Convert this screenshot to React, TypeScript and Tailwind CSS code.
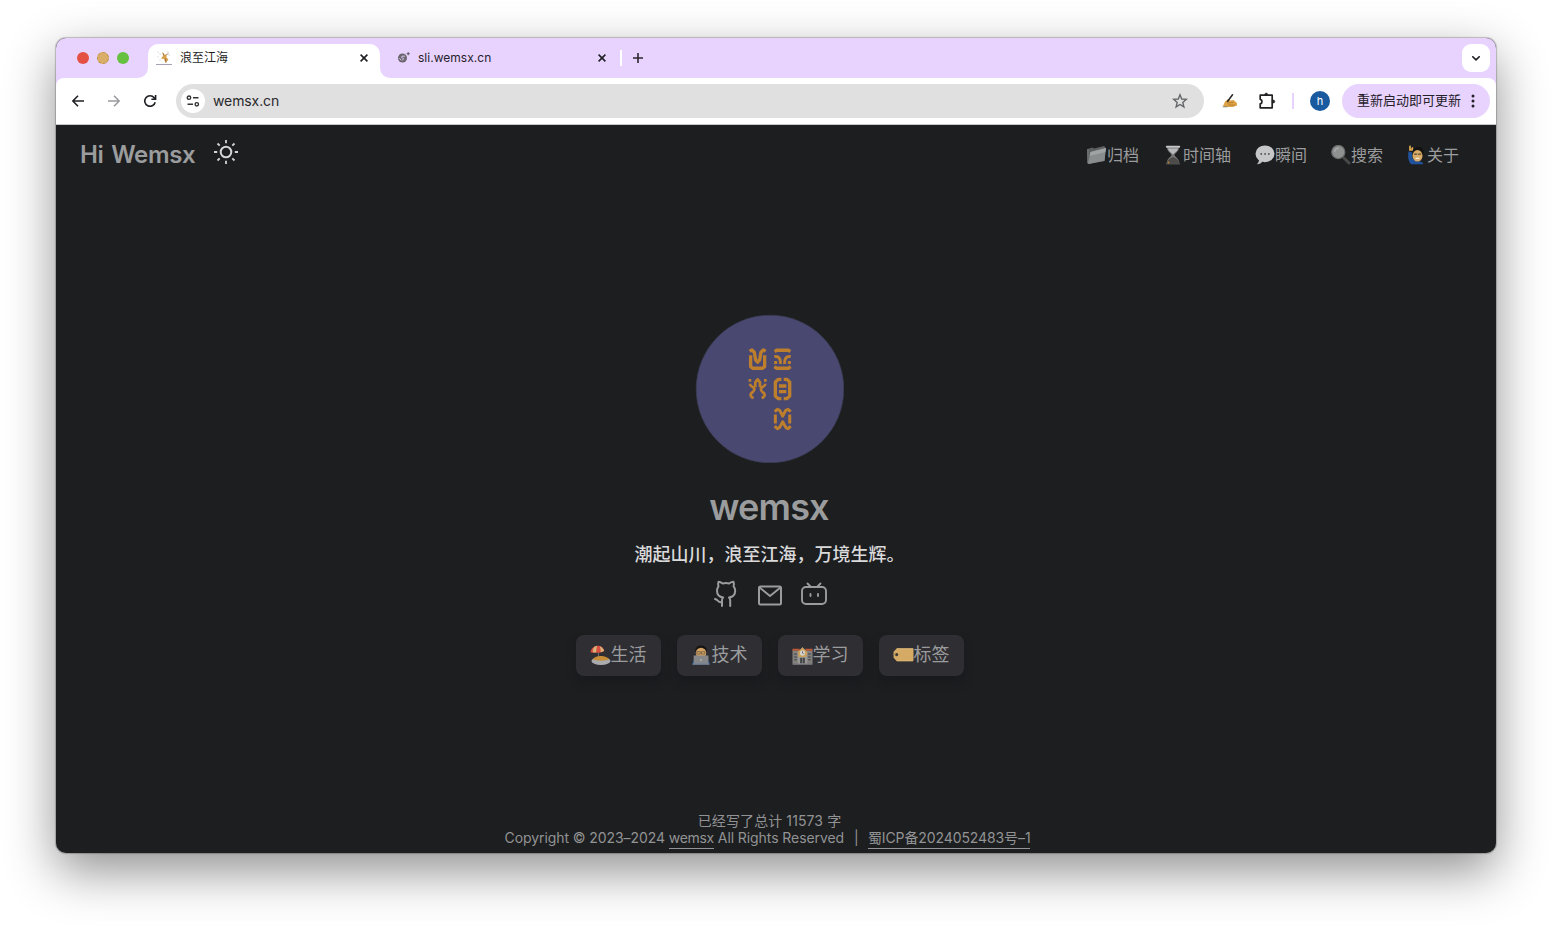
import React from "react";

const glyph = "fill-none stroke-current";

function Svg({ box, className, children }: { box: string; className: string; children: React.ReactNode }) {
  return (
    <svg viewBox={box} className={`shrink-0 ${className}`} fill="none" strokeLinecap="round" strokeLinejoin="round">
      {children}
    </svg>
  );
}

const Close = () => (
  <Svg box="0 0 8 8" className="size-2">
    <path d="M.6.6 7.4 7.4M7.4.6.6 7.4" stroke="#1f1f24" strokeWidth="1.6" strokeLinecap="butt" />
  </Svg>
);

const SurferFavicon = () => (
  <Svg box="0 0 16 16" className="size-4">
    <path d="M6.500 2.500l2 2.500 2-1 0 3.500 2 2-3 3.500-1.500-4-3-.5 2-2.500z" fill="#d9a04c" />
    <path d="M7 3l1 2M10.500 5l1.500-1.500M9.500 9l.5 3" stroke="#8a6238" strokeWidth=".8" />
    <path d="M2 2h.1M4 4h.1M12 2h.1M13 5h.1M2 7h.1M4 10h.1" stroke="#bbb" />
    <path d="M.5 14.500h15" stroke="#a79fb5" strokeWidth="1" />
  </Svg>
);

const GlobeFavicon = () => (
  <Svg box="0 0 14 12" className="w-3.5 h-3">
    <circle cx="4.500" cy="6" r="4.500" fill="#6b6670" />
    <path d="M6.500 4.200H4.200c-1.500 1-.5 1.700.6 1.800 1.400.2 1.200 1.500-.3 1.900M1.700 6.500l1.300 1.500" stroke="#dccaf0" strokeWidth="1" />
    <path d="M10.200.5v2.400M9 1.700h2.400" stroke="#5b5661" strokeWidth="1" />
  </Svg>
);

const Folder = () => (
  <Svg box="0 0 20 20" className="size-5">
    <path d="M.5 4l5-1.500 1.500 1 10-2.500 1.500 1.500-1 13-15 3.500-1.500-1z" fill="#5d6061" />
    <path d="M1 19l2.500-12 15.500-4-1.500 13z" fill="#8a8d8e" />
    <path d="M3.500 7l15.500-4-.6 4L2.500 11z" fill="#a0a3a4" />
    <path d="M.8 4.500v13.500" stroke="#a5a5a5" strokeWidth=".7" />
  </Svg>
);

const Hourglass = () => (
  <Svg box="0 0 20 20" className="size-5">
    <path d="M4 2.5h12c0 4-4.5 6-4.5 7.5s4.5 3.500 4.500 7.500H4c0-4 4.500-6 4.500-7.500S4 6.500 4 2.500z" fill="#777" />
    <path d="M5 3.500h10c-.5 3-4 4.500-5 6-1-1.500-4.500-3-5-6z" fill="#b9babb" />
    <path d="M3.800 1.800h12.400" stroke="#c7c7c7" strokeWidth="2" />
    <path d="M4.500 17.500c0-3 3-4 5.500-5.500 2.500 1.500 5.500 2.500 5.500 5.500z" fill="#4d4a49" />
    <path d="M3.800 18.500h12.400" stroke="#4e4e4e" strokeWidth="2" />
    <circle cx="5.500" cy="17.500" r=".9" fill="#bd812e" />
  </Svg>
);

const Bubble = () => (
  <Svg box="0 0 20 20" className="size-5">
    <path d="M4 14.500c0 2-1 3.500-2 4.800 2.500 0 4.500-1.200 5.500-3z" fill="#c0c1c2" />
    <ellipse cx="10" cy="8.800" rx="9.500" ry="8.400" fill="#c6c7c8" />
    <path d="M6.200 8.900h.1M10 8.900h.1M13.800 8.900h.1" stroke="#4b4b4b" strokeWidth="1.700" />
  </Svg>
);

const Lens = () => (
  <Svg box="0 0 20 20" className="size-5">
    <path d="M13 13l5 5" stroke="#484848" strokeWidth="3" />
    <circle cx="7.300" cy="7" r="6.600" fill="#8f9191" stroke="#696b6b" strokeWidth="1.200" />
    <path d="M3.700 6.500c.3-2 1.500-3 3.500-3.300" stroke="#a9abab" strokeWidth="1.200" />
  </Svg>
);

const RaisedHand = () => (
  <Svg box="0 0 20 20" className="size-5">
    <path d="M1.500 6.500c-1 6 0 9.500 2.500 12.800h12c1-2-2.500-3-6-3-4-.5-5.500-4-5-9z" fill="#20529c" />
    <path d="M3 5V1.300M5 5l.5-2M3 4.500h2" stroke="#d6a34f" strokeWidth="1.800" />
    <ellipse cx="11.300" cy="7" rx="5.600" ry="5" fill="#141312" />
    <ellipse cx="10.500" cy="10.800" rx="5" ry="5.800" fill="#d9ac67" />
    <path d="M7.500 9.200h2.200M11.500 9.200h2.200" stroke="#5f4934" strokeWidth="1.200" />
    <path d="M9 13.300h3" stroke="#f3e7df" strokeWidth="1.200" />
  </Svg>
);

const Beach = () => (
  <Svg box="0 0 22 22" className="w-[21px] h-[22px]">
    <path d="M8.500 7l.8 7" stroke="#777" strokeWidth="1" />
    <ellipse cx="11.500" cy="17.300" rx="10" ry="4.200" fill="#a9abad" />
    <path d="M3 15.500c1-2 4-3.500 8-3.500s8 1.500 9 3.500c-4 2-13 2-17 0z" fill="#c78c37" />
    <path d="M.5 8C1 4 4 1.500 8 1.200c4 0 6.500 2.500 7 5.500C12 9 4 9 .5 8z" fill="#d84f40" />
    <path d="M5 2c-2 2-2 4-2 6l3.500.3c0-3 .5-5 1-7zM10 1.500c1 2 1.300 4 1.200 6.500l3.500-1.300c-.5-2-2-4-4.700-5.200z" fill="#d6b47a" />
  </Svg>
);

const Coder = () => (
  <Svg box="0 0 22 22" className="w-[21px] h-[22px]">
    <path d="M1.500 21c0-4 2-6 5-7h8c3 1 5 3 5 7z" fill="#20528f" />
    <ellipse cx="10.500" cy="6" rx="6" ry="5" fill="#171514" />
    <ellipse cx="10.500" cy="9" rx="5.500" ry="5.700" fill="#d2a363" />
    <path d="M6.500 7.500h3.200v2.500H6.500zM11.300 7.500h3.200v2.500h-3.200z" stroke="#6d5942" strokeWidth=".8" />
    <path d="M2.800 11.500h15.500V20H2.800z" fill="#858789" />
    <path d="M2 20.500h17" stroke="#a2a3a3" strokeWidth="1" />
    <circle cx="10.500" cy="16" r=".9" fill="#c1c1c1" />
  </Svg>
);

const School = () => (
  <Svg box="0 0 22 22" className="w-[21px] h-[22px]">
    <path d="M.5 6h21v14H.5z" fill="#83807e" />
    <path d="M.5 4.500H8V6.500H.5zM14 4.500h7.500v2H14z" fill="#bd5935" />
    <path d="M6 8l5-5 5 5v12H6z" fill="#999896" />
    <path d="M6 8l5-5 5 5-1 5H7z" fill="#caa05b" />
    <circle cx="11" cy="8.800" r="2.700" fill="#d4d2cc" />
    <path d="M11 7.500v1.500l1 .5" stroke="#444" strokeWidth=".7" />
    <path d="M8.500 14h5v6h-5z" fill="#444547" />
    <path d="M11 14v6" stroke="#8a8a8a" strokeWidth=".7" />
    <path d="M2.500 10h2.500M2.500 13h2.500M2.500 16h2.500M17 10h2.500M17 13h2.500M17 16h2.500" stroke="#505154" strokeWidth="1.500" strokeLinecap="butt" />
    <path d="M1 20.500h20" stroke="#a5a5a5" />
  </Svg>
);

const Label = () => (
  <Svg box="0 0 22 22" className="w-[21px] h-[22px]">
    <path d="M4 4h16.500c.8 0 1 .5 1 1v11.500c0 .7-.4 1-1 1H4L.6 14V7.500z" fill="#d4aa65" />
    <path d="M4.500 4.500h16M4.500 17h16" stroke="#dfbc80" strokeWidth=".7" />
    <circle cx="3.800" cy="10.600" r="1.700" fill="#403b35" />
    <path d="M.2 10.600h2" stroke="#a0875f" />
  </Svg>
);

const nav = [
  { icon: <Folder />, text: "归档" },
  { icon: <Hourglass />, text: "时间轴" },
  { icon: <Bubble />, text: "瞬间" },
  { icon: <Lens />, text: "搜索" },
  { icon: <RaisedHand />, text: "关于" },
];

const categories = [
  { icon: <Beach />, text: "生活" },
  { icon: <Coder />, text: "技术" },
  { icon: <School />, text: "学习" },
  { icon: <Label />, text: "标签" },
];

function TabStrip() {
  return (
    <div className="flex h-10 shrink-0 bg-[#e8d3fe]">
      <div className="flex w-[92px] items-center gap-2 pl-[21px]">
        <span className="size-3 rounded-full bg-[#e55044]" />
        <span className="size-3 rounded-full border border-dashed border-[#bd8b3d] bg-[#d9ae68]" />
        <span className="size-3 rounded-full bg-[#65c13f]" />
      </div>
      <div className="relative mt-1.5 flex h-[34px] w-[232px] items-start rounded-t-[10px] bg-white px-2 pt-1.5">
        <svg className="absolute -left-2.5 bottom-0 size-2.5" viewBox="0 0 10 10"><path d="M10 0v10H0A10 10 0 0 0 10 0" fill="#fff" /></svg>
        <svg className="absolute -right-2.5 bottom-0 size-2.5" viewBox="0 0 10 10"><path d="M0 0v10h10A10 10 0 0 1 0 0" fill="#fff" /></svg>
        <SurferFavicon />
        <span className="ml-2 flex-1 text-xs leading-4 text-[#1f1f24]">浪至江海</span>
        <span className="mr-1 mt-1"><Close /></span>
      </div>
      <div className="flex w-[242px] items-center pl-[18px]">
        <GlobeFavicon />
        <span className="ml-1.5 flex-1 text-xs tracking-[0.02px] text-[#26222b]">sli.wemsx.cn</span>
        <span className="mr-3.5"><Close /></span>
        <span className="h-4 w-0.5 bg-white" />
      </div>
      <div className="flex flex-1 items-center pl-[11px]">
        <Svg box="0 0 10 10" className="size-2.5">
          <path d="M5 0v10M0 5h10" stroke="#2b2731" strokeWidth="1.6" strokeLinecap="butt" />
        </Svg>
      </div>
      <div className="mr-1.5 mt-1.5 flex size-7 items-center justify-center rounded-[9px] bg-white">
        <Svg box="0 0 8 5" className="h-[5px] w-2">
          <path d="M.8.7 4 3.900 7.200.7" stroke="#1f1f24" strokeWidth="1.6" />
        </Svg>
      </div>
    </div>
  );
}

function Toolbar() {
  return (
    <div className="bg-[#e8d3fe]">
      <div className="flex h-[47px] shrink-0 items-center rounded-t-[8px] border-b border-[#c9c9c9] bg-white pl-4 pr-1.5">
        <Svg box="0 0 12 12" className="size-3">
          <path d="M6 .8.9 6 6 11.200M1 6h11" stroke="#202124" strokeWidth="1.6" strokeLinecap="butt" strokeLinejoin="miter" />
        </Svg>
        <Svg box="0 0 12 12" className="ml-6 size-3">
          <path d="M6 .8 11.100 6 6 11.200M11 6H0" stroke="#9b9b9d" strokeWidth="1.5" strokeLinecap="butt" strokeLinejoin="miter" />
        </Svg>
        <Svg box="0 0 14 14" className="ml-[23px] size-3.5">
          <path d="M12.200 8.200A5.300 5.300 0 1 1 11.200 3.700L12.300 5M12.600 1v4.300H8.400" stroke="#202124" strokeWidth="1.600" strokeLinecap="butt" strokeLinejoin="miter" />
        </Svg>
        <div className="ml-[19px] flex h-[34px] w-[1028px] items-center rounded-full bg-[#e0e0e0] pl-[5px] pr-4">
          <span className="flex size-6 items-center justify-center rounded-full bg-white">
            <Svg box="0 0 14 12" className="h-3 w-3.5">
              <path d="M7 2.700h5.500M1.500 9.300H7" stroke="#333" strokeWidth="1.500" strokeLinecap="butt" />
              <circle cx="3" cy="2.700" r="1.700" stroke="#333" strokeWidth="1.400" />
              <circle cx="10.800" cy="9.300" r="1.700" stroke="#333" strokeWidth="1.400" />
            </Svg>
          </span>
          <span className="mb-0.5 ml-2 flex-1 text-[14px] tracking-[-0.1px] text-[#29292c]">wemsx.cn</span>
          <Svg box="0 0 16 16" className="size-4">
            <path d="M8 1.800 9.700 6l4.600.4-3.500 3 1.100 4.500L8 11.500l-3.900 2.400 1.100-4.500-3.500-3L6.300 6z" stroke="#65676b" strokeWidth="1.400" strokeLinejoin="miter" />
          </Svg>
        </div>
        <Svg box="0 0 16 14" className="ml-[18px] h-3.5 w-4">
          <path d="M1 12l2-4.500 3-2.500 2 1.500 3.500-.5 3.500 3v2.500l-4 1.500H3z" fill="#dfa447" />
          <path d="M6 9l5-.5M6.500 11h6" stroke="#ad752a" strokeWidth=".8" />
          <path d="M10.500.8 5.500 7.500" stroke="#26262b" strokeWidth="1.500" />
          <path d="M1 12.800h4" stroke="#777" strokeWidth=".8" />
        </Svg>
        <Svg box="0 0 18 18" className="ml-5 size-[18px]">
          <path d="M2.200 3.200h12V8v7.800h-12v-4a2.300 2.300 0 0 0 0-4.500z" stroke="#222225" strokeWidth="1.700" />
          <path d="M6.700 3v-.5a1.500 1.500 0 0 1 3 0V3zM14.500 8h.8a1.500 1.500 0 0 1 0 3h-.8z" fill="#222225" stroke="#222225" strokeWidth=".5" />
        </Svg>
        <span className="ml-4 h-4 w-0.5 bg-[#e8d3fe]" />
        <span className="ml-4 flex size-5 items-center justify-center rounded-full bg-[#19599f] text-[11px] text-white">h</span>
        <div className="ml-3 flex h-[34px] w-[148px] items-center rounded-full bg-[#e8d3fe] pl-[15px] text-[13px] text-[#252128]">
          <span className="whitespace-nowrap">重新启动即可更新</span>
          <Svg box="0 0 4 14" className="ml-2.5 h-3.5 w-1">
            <circle cx="2" cy="2" r="1.500" fill="#252128" /><circle cx="2" cy="7" r="1.500" fill="#252128" /><circle cx="2" cy="12" r="1.500" fill="#252128" />
          </Svg>
        </div>
      </div>
    </div>
  );
}

function Avatar() {
  return (
    <svg viewBox="15.500 12.500 446 446" className={`size-[149px] text-[#bd7f2c] ${glyph}`} strokeWidth="10" strokeLinejoin="round">
      <circle cx="240" cy="237" r="221" fill="#484871" stroke="#3a3b50" strokeWidth="2" />
      <g transform="translate(162 102)">
        <path d="M20 34v34l7 5h28l7-5V34M17 22l7-4 7 7 4 23 6 7 6-7 4-23 7-7 7 4" />
        <path d="M92 23l6-4h35l6 4M91 68l7 5h35l7-5" />
        <path d="M91 38c15-2 20 8 18 22M140 38c-15-2-20 8-18 22M95 51v9M136 51v9" strokeWidth="9" />
        <path d="M18 105v8M64 105v8M18 119c0 9 10 8 13 15 2 8-6 10-10 15-3 5 1 11 8 13M64 119c0 9-10 8-13 15-2 8 6 10 10 15 3 5-1 11-8 13M34 130v-15l7-9 7 9v15" strokeWidth="8" />
        <path d="M112 106h-9l-9 8v42l9 8h9M119 106h9l9 8v42l-9 8h-9M105 126h22M105 143h22" />
        <path d="M92 203l8-7 7 3 9 17 9-17 7-3 8 7M92 246l8 8 7-4 9-17 9 17 7 4 8-8M94 211v27M137 211v27" strokeWidth="9" />
      </g>
    </svg>
  );
}

export default function App() {
  return (
    <div className="h-[927px] w-[1552px] overflow-hidden bg-white pl-14 pt-[38px] font-['Inter','Noto_Sans_CJK_SC',sans-serif]">
      <div className="flex h-[815px] w-[1440px] flex-col overflow-hidden rounded-[10px] bg-[#1d1e20] shadow-[0_0_1px_1px_rgba(0,0,0,0.22),0_18px_50px_rgba(0,0,0,0.44)]">
        <TabStrip />
        <Toolbar />
        <header className="flex h-[60px] shrink-0 items-center pl-6 pr-[37px] text-[#9b9c9d]">
          <h1 className="w-[133px] whitespace-nowrap text-[24px] font-semibold tracking-[-0.35px] [word-spacing:2px]">Hi Wemsx</h1>
          <Svg box="0 0 26 26" className="mb-[7px] size-[26px]">
            <circle cx="13" cy="13" r="5.300" stroke="#d3d4d5" strokeWidth="2" />
            <path d="M13 1v3.200M13 21.800V25M1 13h3.200M21.800 13H25M4.500 4.500l2.200 2.200M19.300 19.300l2.200 2.200M21.500 4.500l-2.200 2.200M6.700 19.300l-2.200 2.200" stroke="#d3d4d5" strokeWidth="1.800" strokeLinecap="butt" />
          </Svg>
          <nav className="ml-auto flex gap-6 text-base">
            {nav.map((item) => (
              <a key={item.text} className="flex items-center whitespace-nowrap">{item.icon}{item.text}</a>
            ))}
          </nav>
        </header>
        <main className="flex flex-1 flex-col items-center pr-[13px] pt-[129px] text-[#9b9c9d]">
          <Avatar />
          <h2 className="mt-[22px] pr-px text-[36px] font-semibold leading-[44px] tracking-[-0.8px]">wemsx</h2>
          <p className="mt-3 text-[18px] font-medium leading-7 text-[#dadadb]">潮起山川，浪至江海，万境生辉。</p>
          <div className="mt-[11px] flex h-7 w-[114px] items-start justify-between">
            <Svg box="0 0 26 28" className="h-7 w-[26px]">
              <path d="M9 26v-5.500c0-1.700.5-2.500 1.200-3C6.500 17 4 15 4 10.500c0-1.800.5-3 1.500-4.200C5 5 5 3 5.500 1.800c1.500 0 3 .8 4.200 1.700 2-.5 4.400-.5 6.500 0C17.500 2.500 19 1.800 20.500 1.800c.5 1.200.6 3 .1 4.500 1 1.200 1.600 2.400 1.600 4.200 0 4.500-2.500 6.500-6.200 7 .8.700 1.200 1.500 1.200 3V26M9 22c-4 1.200-4-2.700-7-3" stroke="#9b9c9d" strokeWidth="2" />
            </Svg>
            <Svg box="0 0 26 28" className="h-7 w-[26px]">
              <rect x="2" y="6.500" width="22" height="18" rx="1.500" stroke="#9b9c9d" strokeWidth="2" /><path d="M2.500 7.500 13 16 23.500 7.500" stroke="#9b9c9d" strokeWidth="1.900" />
            </Svg>
            <Svg box="0 0 26 28" className="h-7 w-[26px]">
              <rect x="1" y="7" width="24" height="17" rx="4" stroke="#9b9c9d" strokeWidth="1.900" />
              <path d="m6.500 3.500 3 3M19.500 3.500l-3 3M9.500 14v2M17 14v2" stroke="#9b9c9d" strokeWidth="1.900" />
            </Svg>
          </div>
          <div className="mt-[27px] flex gap-4">
            {categories.map((item) => (
              <button key={item.text} className="flex h-[41px] w-[85px] items-center whitespace-nowrap rounded-lg bg-[#2e2e33] pb-0.5 pl-3.5 text-[18px] shadow-[0_6px_8px_rgba(24,25,30,0.9)]">
                {item.icon}{item.text}
              </button>
            ))}
          </div>
        </main>
        <footer className="flex h-[41px] shrink-0 flex-col items-center pr-[17px] text-[14px] leading-[17px] text-[#929394]">
          <p className="pl-1 tracking-[0.1px]">已经写了总计 11573 字</p>
          <div className="flex whitespace-pre tracking-[-0.08px]">
            <span>Copyright © 2023–2024 </span>
            <a className="h-[20px] border-b border-current tracking-[-0.3px]">wemsx</a>
            <span className="tracking-[-0.08px]"> All Rights Reserved </span>
            <span className="w-[17px] text-center">|</span>
            <span className="w-[3px]" />
            <a className="h-[20px] border-b border-current tracking-[-0.1px]">蜀ICP备2024052483号–1</a>
          </div>
        </footer>
      </div>
    </div>
  );
}
